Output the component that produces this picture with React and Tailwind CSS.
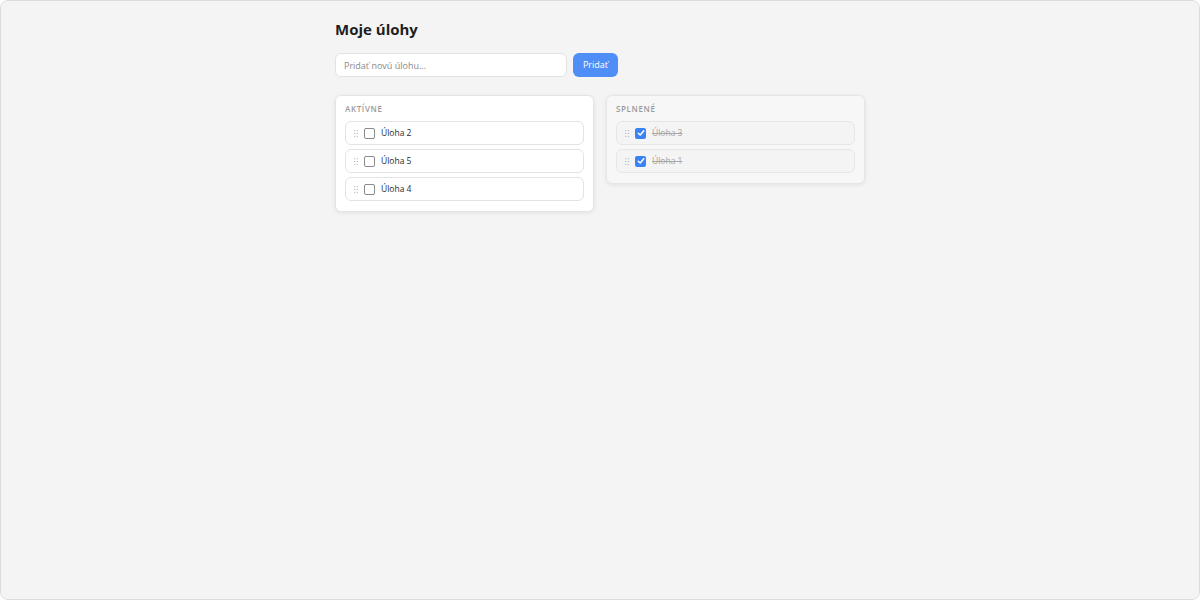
import React, { useState } from 'react';

const initialTasks = [
    { id: 2, title: 'Úloha 2', done: false },
    { id: 5, title: 'Úloha 5', done: false },
    { id: 4, title: 'Úloha 4', done: false },
    { id: 3, title: 'Úloha 3', done: true },
    { id: 1, title: 'Úloha 1', done: true },
];

const DragHandle = () => (
    <svg width="4" height="7" viewBox="0 0 4 7" className="shrink-0 text-gray-400">
        <circle cx="0.75" cy="0.75" r="0.6" fill="currentColor" />
        <circle cx="3.25" cy="0.75" r="0.6" fill="currentColor" />
        <circle cx="0.75" cy="3.5" r="0.6" fill="currentColor" />
        <circle cx="3.25" cy="3.5" r="0.6" fill="currentColor" />
        <circle cx="0.75" cy="6.25" r="0.6" fill="currentColor" />
        <circle cx="3.25" cy="6.25" r="0.6" fill="currentColor" />
    </svg>
);

const TaskItem = ({ task, onToggle }) => (
    <div
        className={`flex items-center h-6 px-2 gap-[6px] rounded-md border ${task.done ? 'border-[#e6e6e6] bg-[#f4f4f4]' : 'border-[#e3e3e3] bg-white'
            }`}
    >
        <DragHandle />
        {task.done ? (
            <span
                onClick={() => onToggle(task.id)}
                className="w-[11px] h-[11px] rounded-[2px] bg-[#3b82f6] flex items-center justify-center shrink-0"
            >
                <svg width="8" height="8" viewBox="0 0 8 8">
                    <path d="M1.3 4.2 L3.2 6 L6.8 1.8" stroke="white" strokeWidth="1.5" fill="none" strokeLinecap="round" strokeLinejoin="round" />
                </svg>
            </span>
        ) : (
            <span
                onClick={() => onToggle(task.id)}
                className="w-[11px] h-[11px] rounded-[2px] border border-[#8a8a8a] bg-white shrink-0"
            />
        )}
        <span className={`text-[8.5px] ${task.done ? 'line-through text-[#a6a6a6]' : 'text-[#2a2a2a]'}`}>
            {task.title}
        </span>
    </div>
);

const Column = ({ title, tasks, done, onToggle }) => (
    <div
        className={`rounded-md border px-[9px] pt-[7px] pb-[10px] shadow-[0_1px_4px_rgba(0,0,0,0.08)] ${done ? 'bg-[#f7f7f7] border-[#e6e6e6]' : 'bg-white border-[#e4e4e4]'
            }`}
    >
        <div className="text-[8px] font-semibold tracking-[0.08em] text-[#9a9a9a] leading-[12px] mb-[6px]">{title}</div>
        <div className="flex flex-col gap-1">
            {tasks.map(t => (
                <TaskItem key={t.id} task={t} onToggle={onToggle} />
            ))}
        </div>
    </div>
);

const App = () => {
    const [tasks, setTasks] = useState(initialTasks);
    const [text, setText] = useState('');

    const toggle = (id) => setTasks(tasks.map(t => (t.id === id ? { ...t, done: !t.done } : t)));

    const addTask = () => {
        if (!text.trim()) return;
        setTasks([{ id: Date.now(), title: text, done: false }, ...tasks]);
        setText('');
    };

    return (
        <div className="h-[600px] w-full bg-[#f4f4f4] border border-[#dcdcdc] rounded-lg overflow-hidden font-['Open_Sans',sans-serif]">
            <div className="w-[530px] mx-auto pt-[17px]">
                <h1 className="text-[15px] font-bold text-[#1e1e1e] leading-[22px] mb-[13px]">Moje úlohy</h1>

                <div className="flex gap-[6px] mb-[18px]">
                    <input
                        value={text}
                        onChange={(e) => setText(e.target.value)}
                        placeholder="Pridať novú úlohu..."
                        className="w-[232px] h-6 px-2 text-[9px] bg-white border border-[#e2e2e2] rounded-md outline-none placeholder:text-[#8a8a8a]"
                    />
                    <button onClick={addTask} className="h-6 w-[45px] bg-[#4f8ef7] text-white text-[9px] rounded-md">
                        Pridať
                    </button>
                </div>

                <div className="grid grid-cols-2 gap-3 items-start">
                    <Column title="AKTÍVNE" tasks={tasks.filter(t => !t.done)} onToggle={toggle} />
                    <Column title="SPLNENÉ" tasks={tasks.filter(t => t.done)} done onToggle={toggle} />
                </div>
            </div>
        </div>
    );
};

export default App;
